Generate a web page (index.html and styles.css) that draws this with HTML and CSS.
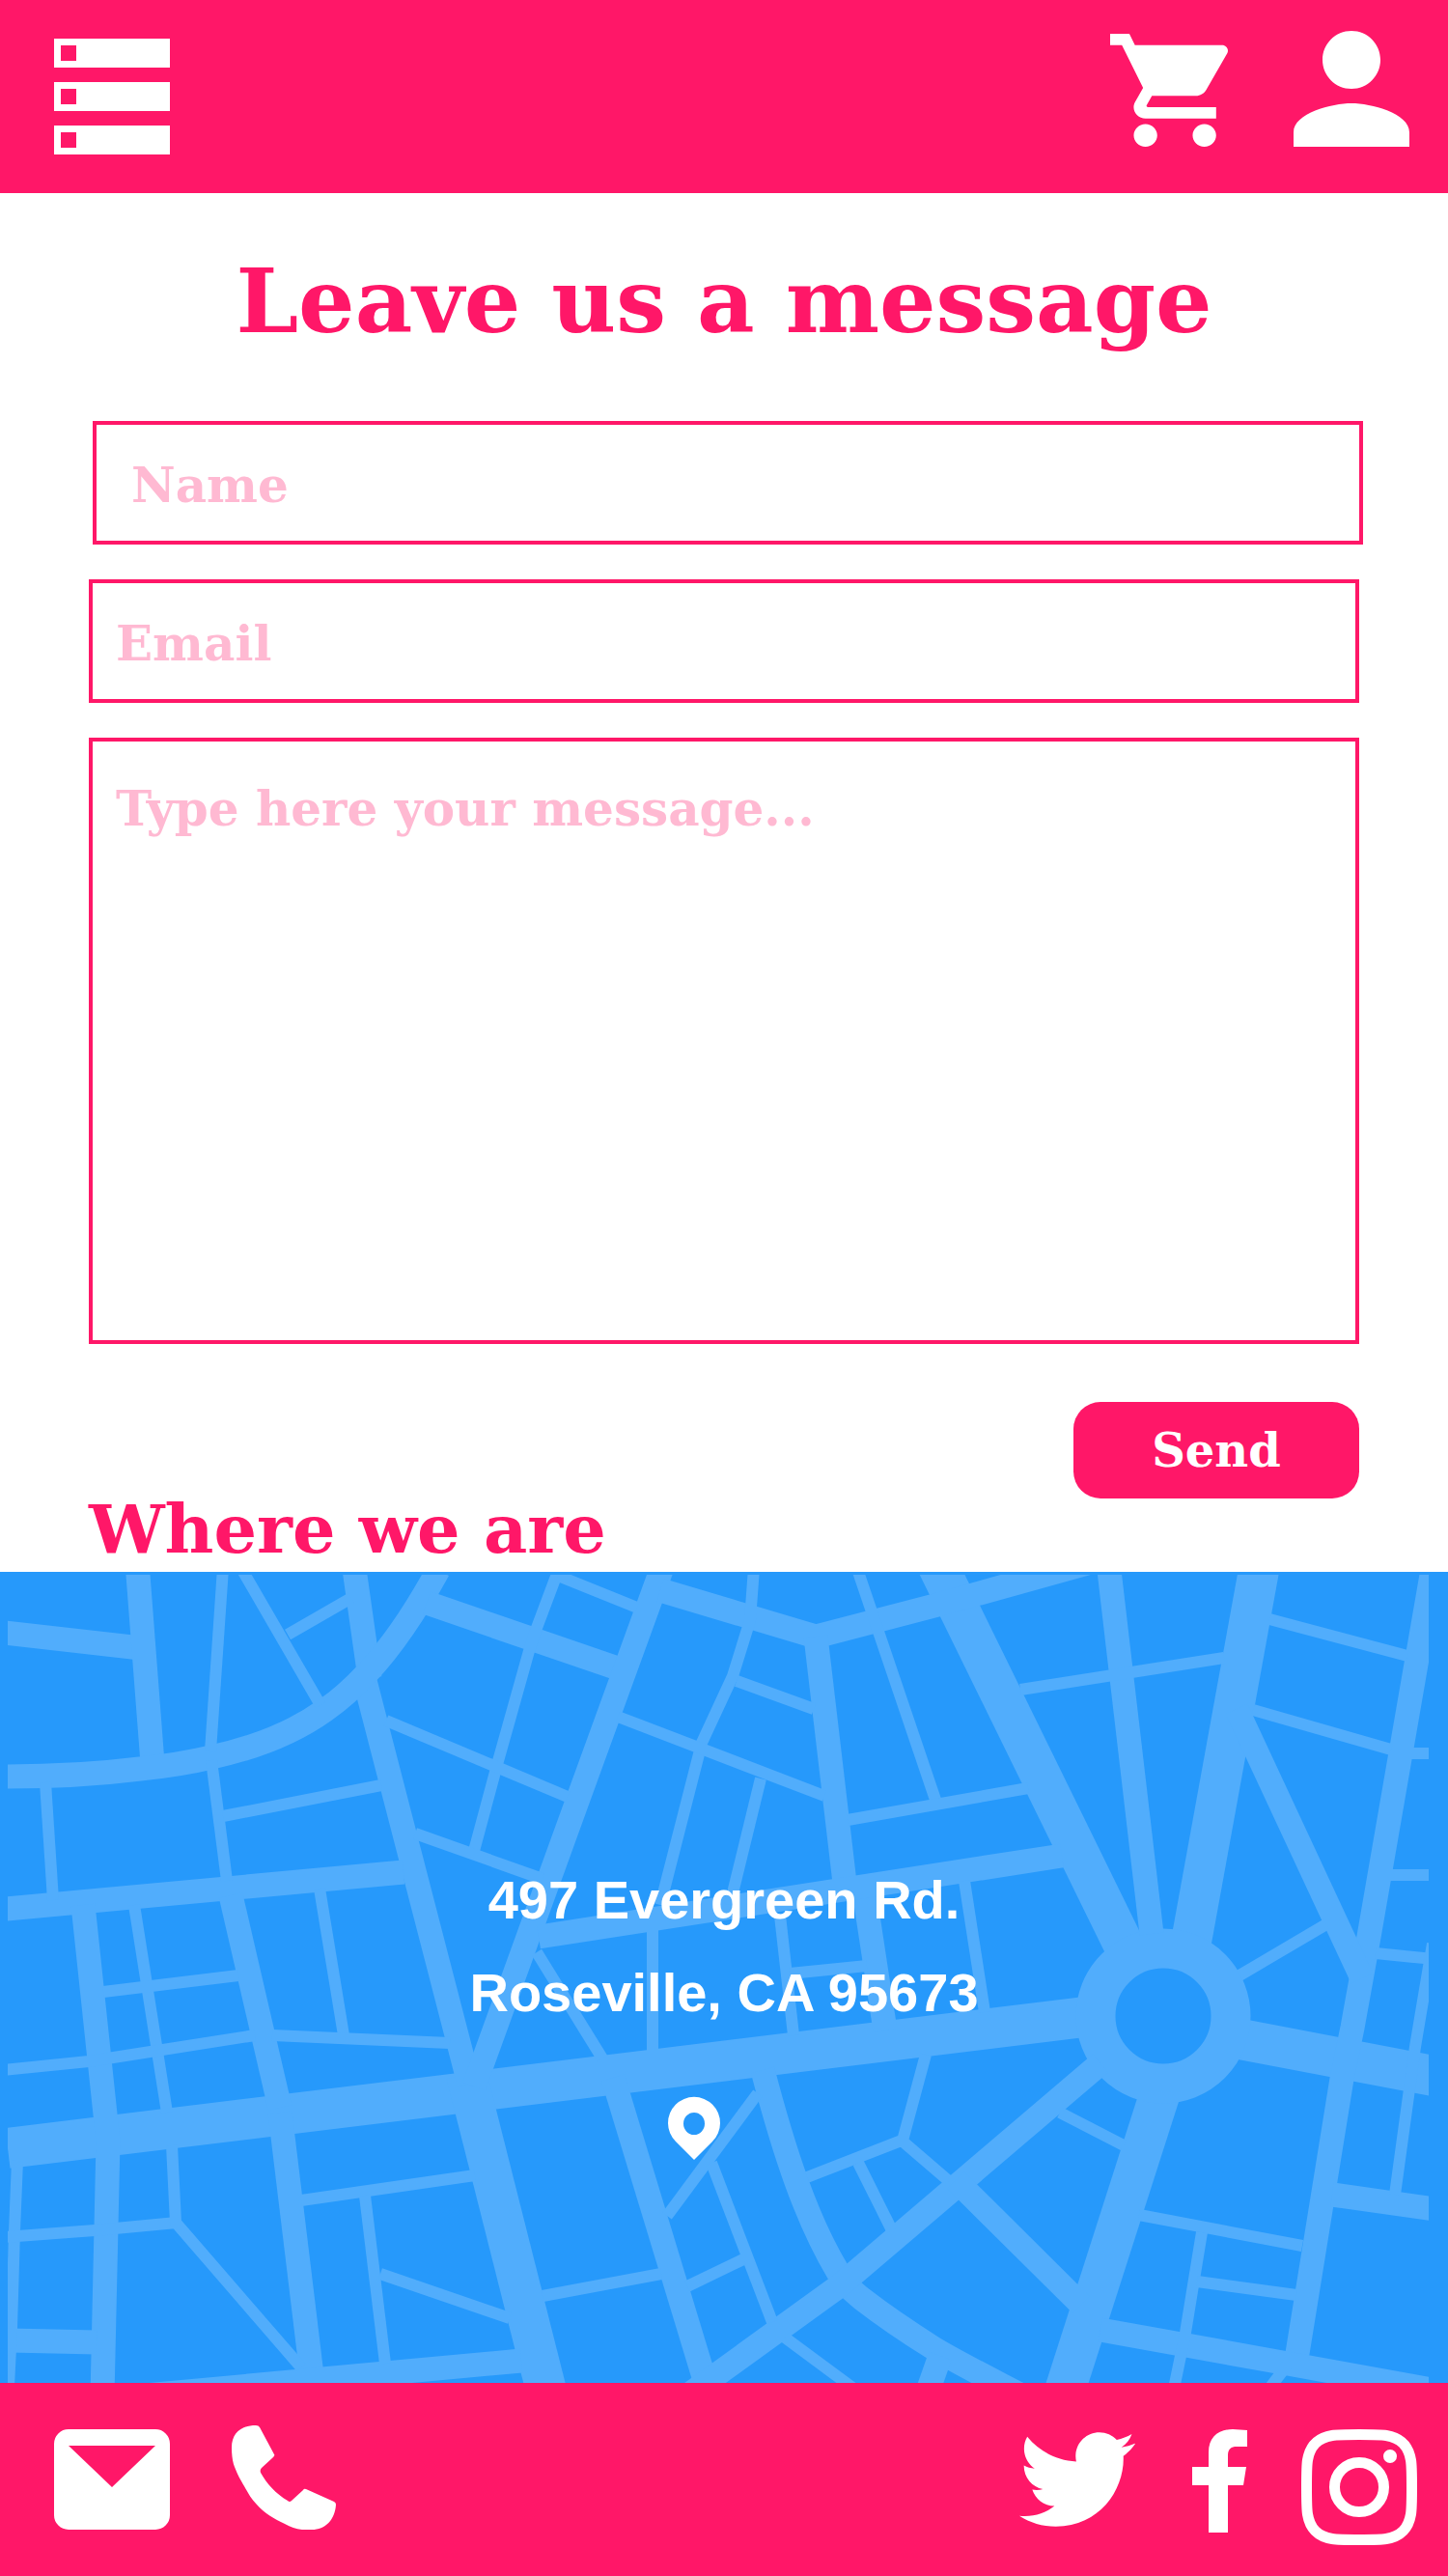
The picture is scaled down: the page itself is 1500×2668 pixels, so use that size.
FILE: index.html
```html
<!DOCTYPE html>
<html lang="en">
<head>
  <meta charset="utf-8">
  <meta name="viewport" content="width=device-width, initial-scale=1">
  <title>Contact</title>
  <link rel="stylesheet" href="styles.css">
</head>
<body>
  <header class="topbar">
    <button class="icon-button" type="button" aria-label="Menu">
      <svg width="120" height="120" viewBox="0 0 120 120" fill="currentColor" fill-rule="evenodd">
        <path d="M0 0h120v30H0zM7 7v16h16V7zM0 45h120v30H0zM7 52v16h16V52zM0 90h120v30H0zM7 97v16h16V97z"/>
      </svg>
    </button>
    <nav class="topbar__tools" aria-label="Account">
      <a class="icon-link" href="#cart" aria-label="Cart">
        <svg width="122" height="117" viewBox="1 2 20 20" preserveAspectRatio="none" fill="currentColor">
          <path d="M7 18c-1.100 0-1.990.9-1.990 2S5.900 22 7 22s2-.9 2-2-.9-2-2-2zM1 2v2h2l3.600 7.590-1.350 2.450c-.16.28-.25.61-.25.96 0 1.100.9 2 2 2h12v-2H7.420c-.14 0-.25-.11-.25-.25l.03-.12.9-1.630h7.450c.75 0 1.410-.41 1.750-1.030l3.580-6.490c.08-.14.12-.31.12-.48 0-.55-.45-1-1-1H5.210l-.94-2H1zm16 16c-1.100 0-1.990.9-1.990 2s.89 2 1.990 2 2-.9 2-2-.9-2-2-2z"/>
        </svg>
      </a>
      <a class="icon-link" href="#account" aria-label="Profile">
        <svg width="120" height="120" viewBox="4 4 16 16" fill="currentColor">
          <path d="M12 12c2.210 0 4-1.790 4-4s-1.790-4-4-4-4 1.790-4 4 1.790 4 4 4zm0 2c-2.670 0-8 1.340-8 4v2h16v-2c0-2.660-5.330-4-8-4z"/>
        </svg>
      </a>
    </nav>
  </header>

  <main>
    <h1 class="title">Leave us a message</h1>
    <form class="form" action="#" method="post">
      <input class="field field--name" type="text" name="name" placeholder="Name" aria-label="Name">
      <input class="field" type="email" name="email" placeholder="Email" aria-label="Email">
      <textarea class="field field--message" name="message" placeholder="Type here your message..." aria-label="Message"></textarea>
      <button class="send" type="submit">Send</button>
    </form>

    <h2 class="subtitle">Where we are</h2>
    <section class="map" aria-label="Map">
      <svg class="map__roads" viewBox="0 0 1500 840" preserveAspectRatio="xMidYMid slice" fill="none" stroke="#51adfc" aria-hidden="true">
        <clipPath id="map-area"><path d="M8 3h1472v837H8z"/></clipPath>
        <g clip-path="url(#map-area)">
          <!-- boulevards -->
          <g stroke-width="42">
            <path d="M8 597L1140 459"/>
            <path d="M483 520L572 872"/>
            <path d="M956 -38L1183 425"/>
            <path d="M1311 -40L1230 405"/>
            <path d="M1205 530L1096 870"/>
            <path d="M1285 484L1484 522"/>
          </g>
          <circle cx="1205" cy="460" r="70" fill="#2699fb" stroke-width="41"/>
          <!-- streets -->
          <g stroke-width="25">
            <path d="M-4 62L146 79"/>
            <path d="M142 -10L158 198"/>
            <path d="M366 -10L383 110"/>
            <path d="M377 109L471 472L486 530"/>
            <path d="M6 212C60 212 105 209 145 204C175 201 198 197 219 192C265 182 305 166 337 143C353 132 367 119 381 104C408 75 430 42 454 -2"/>
            <path d="M442 32L640 100"/>
            <path d="M692 -21L600 232L491 533"/>
            <path d="M684 19L845 67L968 35L1130 -10"/>
            <path d="M845 67L875 322"/>
            <path d="M895 330L917 475"/>
            <path d="M558 378L1100 294"/>
            <path d="M1148 -10L1193 375"/>
            <path d="M1486 -14L1452 182L1418 378L1401 472L1390 525L1341 828"/>
            <path d="M1281 142L1411 421"/>
            <path d="M1380 645L1494 661"/>
            <path d="M1140 785L1323 818L1494 849"/>
            <path d="M635 524L737 860"/>
            <path d="M790 516C812 600 835 670 868 725C875 738 882 744 893 753C915 770 940 787 967 804C990 818 1020 833 1064 856"/>
            <path d="M700 862L869 740L1140 509"/>
            <path d="M990 630L1120 759"/>
            <path d="M974 812L957 860"/>
            <path d="M-4 350L418 311"/>
            <path d="M86 345L112 590L106 854"/>
            <path d="M239 335L290 555"/>
            <path d="M290 560L323 832"/>
            <path d="M10 796L100 798"/>
            <path d="M150 853L540 817"/>
          </g>
          <!-- lanes -->
          <g stroke-width="12">
            <path d="M231 -4L218 186"/>
            <path d="M248 -7L332 138"/>
            <path d="M298 65L364 27"/>
            <path d="M580 -6L556 58L548 82L516 196L491 289"/>
            <path d="M578 4L660 37"/>
            <path d="M781 -4L777 50L759 108L727 177L684 345"/>
            <path d="M763 113L843 142"/>
            <path d="M640 150L854 232"/>
            <path d="M788 214L756 345"/>
            <path d="M887 -6L969 236"/>
            <path d="M878 257L1065 224"/>
            <path d="M1057 122L1268 89"/>
            <path d="M1315 49L1458 87"/>
            <path d="M1298 143L1441 184"/>
            <path d="M1455 188H1484M1436 314H1484"/>
            <path d="M1284 418L1374 365"/>
            <path d="M1425 395L1484 401"/>
            <path d="M1484 385L1466 492L1445 645"/>
            <path d="M1180 666L1349 698"/>
            <path d="M1245 684L1228 788L1216 846"/>
            <path d="M1240 735L1343 749"/>
            <path d="M1333 822L1311 851"/>
            <path d="M785 540L691 667"/>
            <path d="M737 612L800 777"/>
            <path d="M712 740L770 712"/>
            <path d="M562 750L685 727"/>
            <path d="M836 627L934 589L983 631M935 589L959 500"/>
            <path d="M889 612L924 682"/>
            <path d="M813 793L890 850"/>
            <path d="M1098 560L1164 594"/>
            <path d="M556 394L624 504"/>
            <path d="M676 370V500"/>
            <path d="M808 356L822 480"/>
            <path d="M818 416L898 408"/>
            <path d="M999 320L1020 456"/>
            <path d="M47 218L55 340"/>
            <path d="M219 195L235 320"/>
            <path d="M231 253L395 221"/>
            <path d="M400 154L588 233"/>
            <path d="M430 271L562 318"/>
            <path d="M139 345L173 560"/>
            <path d="M107 435L247 418"/>
            <path d="M331 328L356 480"/>
            <path d="M282 480L466 488"/>
            <path d="M4 516L92 507L264 480"/>
            <path d="M18 610L15 683L12 783L9 844"/>
            <path d="M4 689L98 682L183 674"/>
            <path d="M178 594L182 674L312 824"/>
            <path d="M312 651L492 625"/>
            <path d="M378 646L399 820"/>
            <path d="M394 727L528 773"/>
          </g>
        </g>
        <path fill="#fff" stroke="none" fill-rule="evenodd" d="M719 609L700 590A27 27 0 1 1 738 590ZM719 560a11 11.500 0 1 0 0 23a11 11.500 0 1 0 0-23z"/>
      </svg>
      <address class="map__address">497 Evergreen Rd.<br>Roseville, CA 95673</address>
    </section>
  </main>

  <footer class="bottombar">
    <div class="bottombar__contact">
      <a class="icon-link" href="mailto:" aria-label="Email us">
        <svg width="120" height="104" viewBox="0 0 120 104" fill="currentColor" fill-rule="evenodd">
          <path d="M15 0H105A15 15 0 0 1 120 15V89A15 15 0 0 1 105 104H15A15 15 0 0 1 0 89V15A15 15 0 0 1 15 0ZM15 17L60 60L105 17Z"/>
        </svg>
      </a>
      <a class="icon-link" href="tel:" aria-label="Call us">
        <svg width="108" height="108" viewBox="0 0 108 108" fill="currentColor">
          <path d="M0 23C0 8 10 0 25 0Q28 0 29 2L44 30Q45 31 43 33L31 44Q29 46 30 49C36 60 46 71 58 78Q60 80 62 78L74 67Q75 65 77 66L106 79Q108 80 108 82C107 98 97 108 83 108C72 109 64 107 55 102C44 97 34 91 26 82C20 76 17 70 13 63C9 56 6 51 3 43Q0 36 0 23Z"/>
        </svg>
      </a>
    </div>
    <nav class="bottombar__social" aria-label="Social media">
      <a class="icon-link" href="#twitter" aria-label="Twitter">
        <svg width="120" height="104" viewBox="0 1.600 24 20.800" fill="currentColor">
          <path d="M23.954 4.569c-.885.389-1.830.654-2.825.775 1.014-.611 1.794-1.574 2.163-2.723-.951.555-2.005.959-3.127 1.184-.896-.959-2.173-1.559-3.591-1.559-2.717 0-4.920 2.203-4.920 4.917 0 .39.045.765.127 1.124C7.691 8.094 4.066 6.130 1.640 3.161c-.427.722-.666 1.561-.666 2.475 0 1.710.87 3.213 2.188 4.096-.807-.026-1.566-.248-2.228-.616v.061c0 2.385 1.693 4.374 3.946 4.827-.413.111-.849.171-1.296.171-.314 0-.615-.03-.916-.086.631 1.953 2.445 3.377 4.604 3.417-1.680 1.319-3.809 2.105-6.102 2.105-.39 0-.779-.023-1.170-.067 2.189 1.394 4.768 2.209 7.557 2.209 9.054 0 13.999-7.496 13.999-13.986 0-.209 0-.42-.015-.63.961-.689 1.800-1.560 2.460-2.548z"/>
        </svg>
      </a>
      <a class="icon-link" href="#facebook" aria-label="Facebook">
        <svg width="60" height="107" viewBox="0 0 60 107" fill="currentColor">
          <path d="M3 39H20V24C20 8 30 0 45 0L60 1V18H49C43 18 40 21 40 27V39H59L56 58H40V107H20V58H3Z"/>
        </svg>
      </a>
      <a class="icon-link" href="#instagram" aria-label="Instagram">
        <svg width="120" height="120" viewBox="0 0 120 120" fill="none" stroke="currentColor" stroke-width="11">
          <path d="M60 5.500C76 5.500 82 5.500 88 6.500C103 9 111 17 113.500 32C114.500 38 114.500 44 114.500 60S114.500 82 113.500 88C111 103 103 111 88 113.500C82 114.500 76 114.500 60 114.500S38 114.500 32 113.500C17 111 9 103 6.500 88C5.500 82 5.500 76 5.500 60S5.500 38 6.500 32C9 17 17 9 32 6.500C38 5.500 44 5.500 60 5.500Z"/>
          <circle cx="60" cy="60" r="25.500"/>
          <circle cx="92" cy="28" r="7" fill="currentColor" stroke="none"/>
        </svg>
      </a>
    </nav>
  </footer>
</body>
</html>
```
FILE: styles.css
```css
:root {
  --pink: #ff1768;
  --pink-light: #ffb9d2;
  --blue: #2699fb;
  --slab: "DejaVu Serif", Rockwell, serif;
}

* {
  box-sizing: border-box;
}

body {
  margin: 0;
  background: #fff;
  color: var(--pink);
  font-family: var(--slab);
  font-weight: 700;
}

svg {
  display: block;
}

.icon-button {
  padding: 0;
  border: 0;
  background: none;
  color: #fff;
  cursor: pointer;
}

.icon-link {
  color: #fff;
}

/* Top bar */

.topbar {
  display: flex;
  align-items: center;
  justify-content: space-between;
  min-height: 200px;
  padding: 0 40px 0 56px;
  background: var(--pink);
}

.topbar__tools {
  display: flex;
  align-items: flex-end;
  gap: 68px;
  padding-bottom: 16px;
}

/* Message form */

.title {
  margin: 0;
  padding: 56px 0 68px;
  font-size: 92px;
  line-height: 112px;
  text-align: center;
}

.form {
  display: flex;
  flex-direction: column;
  gap: 36px;
  padding: 0 88px 0 92px;
}

.field {
  height: 128px;
  margin: 0 4px 0 0;
  padding: 4px 24px 0;
  border: 4px solid var(--pink);
  border-radius: 0;
  outline: 0;
  background: #fff;
  color: var(--pink);
  font: 700 50px/60px var(--slab);
}

.field::placeholder {
  color: var(--pink-light);
  opacity: 1;
}

.field--name {
  margin: 0 0 0 4px;
  padding: 4px 36px 0;
}

.field--message {
  height: 628px;
  padding-top: 40px;
  resize: none;
}

.send {
  align-self: flex-end;
  width: 296px;
  height: 100px;
  margin: 24px 4px 0 0;
  padding: 0;
  border: 0;
  border-radius: 28px;
  background: var(--pink);
  color: #fff;
  font: 700 48px/60px var(--slab);
  cursor: pointer;
}

/* Map */

.subtitle {
  margin: 0;
  padding: 0 92px 12px;
  font-size: 70px;
  line-height: 64px;
}

.map {
  display: grid;
  background: var(--blue);
}

.map__roads,
.map__address {
  grid-area: 1 / 1;
}

.map__roads {
  width: 100%;
  min-height: 840px;
}

.map__address {
  padding-top: 292px;
  color: #fff;
  font: 700 56px/96px "Liberation Sans", Arial, sans-serif;
  text-align: center;
}

/* Bottom bar */

.bottombar {
  display: flex;
  align-items: flex-start;
  justify-content: space-between;
  min-height: 200px;
  padding: 44px 32px 32px 56px;
  background: var(--pink);
}

.bottombar__contact {
  display: flex;
  align-items: flex-end;
  gap: 64px;
}

.bottombar__social {
  display: flex;
  align-items: flex-start;
  gap: 56px;
  padding-top: 4px;
}
```
